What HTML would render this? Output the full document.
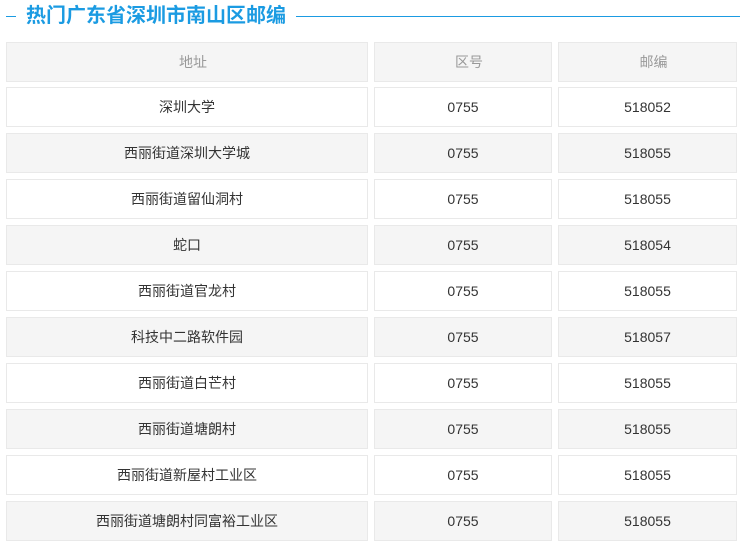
<!DOCTYPE html>
<html><head><meta charset="utf-8"><style>
body{margin:0;background:#fff;width:740px;height:554px;overflow:hidden;position:relative;font-family:"Liberation Sans","Noto Sans CJK SC",sans-serif;}
.t{position:absolute;left:26px;top:3px;font-size:20px;font-weight:bold;color:#1b9be2;line-height:26px;letter-spacing:0px;}
.l{position:absolute;height:1px;background:#1b9be2;top:16px}
.c{position:absolute;box-sizing:border-box;border:1px solid #e9e9e9;height:40px;line-height:38px;text-align:center;font-size:14px;color:#333;}
.g{background:#f5f5f5}
.h{color:#999;padding-left:12px}
</style></head><body>
<div class="l" style="left:6px;width:10px"></div>
<div class="t">热门广东省深圳市南山区邮编</div>
<div class="l" style="left:296px;width:444px"></div>
<div id="tb"></div>
<script>
var rows=[["地址","区号","邮编"],["深圳大学","0755","518052"],["西丽街道深圳大学城","0755","518055"],["西丽街道留仙洞村","0755","518055"],["蛇口","0755","518054"],["西丽街道官龙村","0755","518055"],["科技中二路软件园","0755","518057"],["西丽街道白芒村","0755","518055"],["西丽街道塘朗村","0755","518055"],["西丽街道新屋村工业区","0755","518055"],["西丽街道塘朗村同富裕工业区","0755","518055"]];
var cols=[[6,362],[374,178],[558,179]];var h="";
rows.forEach(function(r,i){var y=i==0?42:87+(i-1)*46;var cls="c"+(i%2==0?" g":"")+(i==0?" h":"");
r.forEach(function(t,j){h+='<div class="'+cls+'" style="left:'+cols[j][0]+'px;top:'+y+'px;width:'+cols[j][1]+'px">'+t+'</div>';});});
document.getElementById("tb").innerHTML=h;
</script>
</body></html>
